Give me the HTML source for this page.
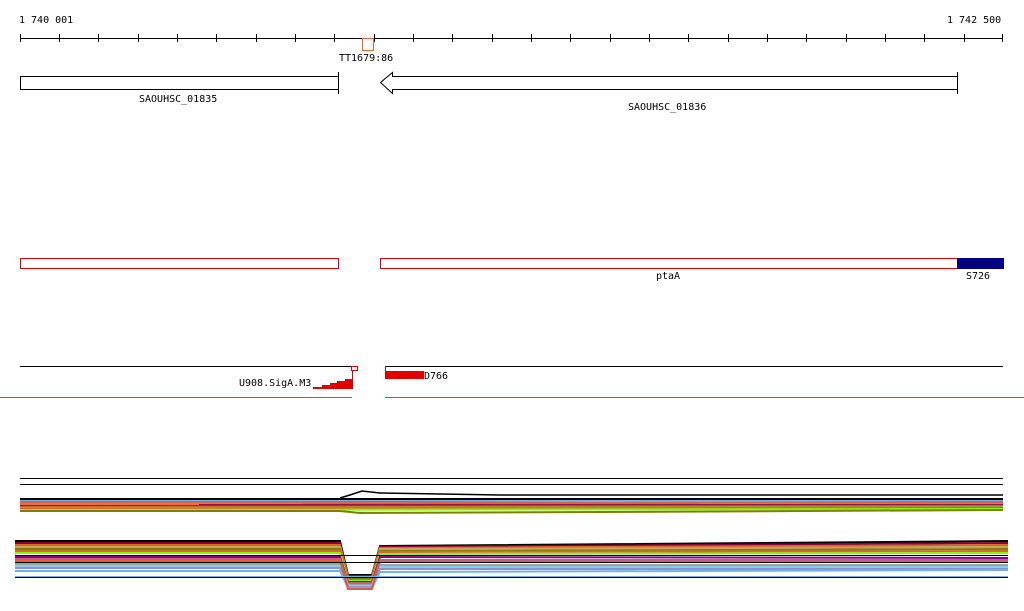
<!DOCTYPE html>
<html><head><meta charset="utf-8"><style>
html,body{margin:0;padding:0;background:#fff;width:1024px;height:611px;overflow:hidden}
svg text{font-family:"DejaVu Sans Mono","Liberation Mono",monospace;font-size:10px;fill:#000}
</style></head><body>
<svg width="1024" height="611" viewBox="0 0 1024 611" xmlns="http://www.w3.org/2000/svg" shape-rendering="crispEdges">
<text x="19" y="23">1 740 001</text>
<text x="947" y="23">1 742 500</text>
<line x1="20" y1="38.5" x2="1003" y2="38.5" stroke="#000"/>
<g stroke="#000">
<line x1="20.5" y1="34" x2="20.5" y2="42"/><line x1="59.5" y1="34" x2="59.5" y2="42"/><line x1="98.5" y1="34" x2="98.5" y2="42"/><line x1="138.5" y1="34" x2="138.5" y2="42"/><line x1="177.5" y1="34" x2="177.5" y2="42"/><line x1="216.5" y1="34" x2="216.5" y2="42"/><line x1="256.5" y1="34" x2="256.5" y2="42"/><line x1="295.5" y1="34" x2="295.5" y2="42"/><line x1="334.5" y1="34" x2="334.5" y2="42"/><line x1="374.5" y1="34" x2="374.5" y2="42"/><line x1="413.5" y1="34" x2="413.5" y2="42"/><line x1="452.5" y1="34" x2="452.5" y2="42"/><line x1="492.5" y1="34" x2="492.5" y2="42"/><line x1="531.5" y1="34" x2="531.5" y2="42"/><line x1="570.5" y1="34" x2="570.5" y2="42"/><line x1="610.5" y1="34" x2="610.5" y2="42"/><line x1="649.5" y1="34" x2="649.5" y2="42"/><line x1="688.5" y1="34" x2="688.5" y2="42"/><line x1="728.5" y1="34" x2="728.5" y2="42"/><line x1="767.5" y1="34" x2="767.5" y2="42"/><line x1="806.5" y1="34" x2="806.5" y2="42"/><line x1="846.5" y1="34" x2="846.5" y2="42"/><line x1="885.5" y1="34" x2="885.5" y2="42"/><line x1="924.5" y1="34" x2="924.5" y2="42"/><line x1="964.5" y1="34" x2="964.5" y2="42"/><line x1="1002.5" y1="34" x2="1002.5" y2="42"/>
</g>
<rect x="362.5" y="38.5" width="11" height="12" fill="#fff" stroke="#f06040"/>
<text x="339" y="61">TT1679:86</text>
<rect x="20.5" y="76.5" width="318" height="13" fill="#fff" stroke="#000"/>
<line x1="338.5" y1="72" x2="338.5" y2="94" stroke="#000"/>
<text x="139" y="102">SAOUHSC_01835</text>
<path d="M380.5,82.5 L392.5,72.5 L392.5,76.5 L957.5,76.5 L957.5,89.5 L392.5,89.5 L392.5,93.5 Z" fill="#fff" stroke="#000" shape-rendering="auto"/>
<line x1="957.5" y1="72" x2="957.5" y2="94" stroke="#000"/>
<text x="628" y="110">SAOUHSC_01836</text>
<rect x="20.5" y="258.5" width="318" height="10" fill="#fff" stroke="#e00000"/>
<rect x="380.5" y="258.5" width="577" height="10" fill="#fff" stroke="#e00000"/>
<rect x="957" y="258" width="47" height="11" fill="#000080"/>
<text x="656" y="279">ptaA</text>
<text x="966" y="279">S726</text>
<line x1="20" y1="366.5" x2="357" y2="366.5" stroke="#000"/>
<line x1="385" y1="366.5" x2="1003" y2="366.5" stroke="#000"/>
<rect x="351.5" y="366.5" width="6" height="4" fill="#fff" stroke="#e00000"/>
<line x1="352.5" y1="370" x2="352.5" y2="389" stroke="#e00000"/>
<path d="M313,389 L352,389 L352,379 L345,379 L345,381 L337,381 L337,383 L330,383 L330,385 L322,385 L322,387 L313,387 Z" fill="#e00000"/>
<line x1="385.5" y1="366" x2="385.5" y2="372" stroke="#e00000"/>
<rect x="385" y="371" width="39" height="8" fill="#e00000"/>
<text x="424" y="379">D766</text>
<text x="239" y="386">U908.SigA.M3</text>
<line x1="0" y1="397.5" x2="352" y2="397.5" stroke="#e04040"/>
<line x1="385" y1="397.5" x2="1024" y2="397.5" stroke="#e04040"/>
<line x1="20" y1="478.5" x2="1003" y2="478.5" stroke="#000"/>
<line x1="20" y1="484.5" x2="1003" y2="484.5" stroke="#000"/>
<g fill="none" stroke-width="2" shape-rendering="auto">
<polyline stroke="#000" stroke-width="1.5" points="340,498 350,495 362,491 380,493 500,495 1003,495"/>
<polyline stroke="#000" points="20,499 1003,499"/>
<polyline stroke="#6cb4ee" points="20,501 1003,501"/>
<polyline stroke="#c06080" points="20,502 400,502 600,503 1003,502"/>
<polyline stroke="#e06040" points="20,503 1003,503"/>
<polyline stroke="#a09060" points="20,504 300,504 300,505 700,505 700,504 1003,504"/>
<polyline stroke="#e07050" points="20,505 1003,505"/>
<polyline stroke="#8b1a4a" points="20,506 200,506 200,505 1003,505"/>
<polyline stroke="#d2691e" points="20,507 1003,506"/>
<polyline stroke="#9a9a30" points="20,508 1003,507"/>
<polyline stroke="#e06040" points="20,509 1003,508"/>
<polyline stroke="#7cfc00" points="20,510 1003,509"/>
<polyline stroke="#808000" points="20,511 340,511 360,513 600,512 1003,510"/>
<polyline stroke="#000" points="15,541 340,541 348,575 372,575 380,546 1008,541"/>
<polyline stroke="#8b0040" points="15,543 340,543 348,576 372,576 380,547 1008,543"/>
<polyline stroke="#d2691e" points="15,545 340,545 348,577 372,577 380,548 1008,545"/>
<polyline stroke="#c8a060" points="15,547 340,547 348,578 372,578 380,549 1008,547"/>
<polyline stroke="#808000" points="15,549 340,549 348,579 372,579 380,551 1008,549"/>
<polyline stroke="#e06040" points="15,551 340,551 348,580 372,580 380,552 1008,551"/>
<polyline stroke="#7cfc00" points="15,553 340,553 348,581 372,581 380,554 1008,553"/>
<polyline stroke="#8b008b" points="15,557 340,557 348,582 372,582 380,557 1008,558"/>
<polyline stroke="#c06080" points="15,559 340,559 348,583 372,583 380,560 1008,560"/>
<polyline stroke="#e06040" points="15,561 340,561 348,584 372,584 380,562 1008,562"/>
<polyline stroke="#a0a0a0" points="15,564 340,564 348,585 372,585 380,565 1008,565"/>
<polyline stroke="#87ceeb" points="15,566 340,566 348,586 372,586 380,567 1008,567"/>
<polyline stroke="#9090d0" points="15,568 340,568 348,587 372,587 380,569 1008,569"/>
<polyline stroke="#6cb4ee" points="15,571 340,571 348,588 372,588 380,572 1008,570"/>
<polyline stroke="#d06040" points="340,560 348,589 372,589 380,560"/>
</g>
<line x1="15" y1="555.5" x2="1008" y2="555.5" stroke="#000"/>
<line x1="15" y1="562.5" x2="1008" y2="562.5" stroke="#000"/>
<line x1="15" y1="577.5" x2="1008" y2="577.5" stroke="#000"/>
<line x1="15" y1="576.5" x2="1008" y2="576.5" stroke="#6cb4ee"/>
</svg>
</body></html>
